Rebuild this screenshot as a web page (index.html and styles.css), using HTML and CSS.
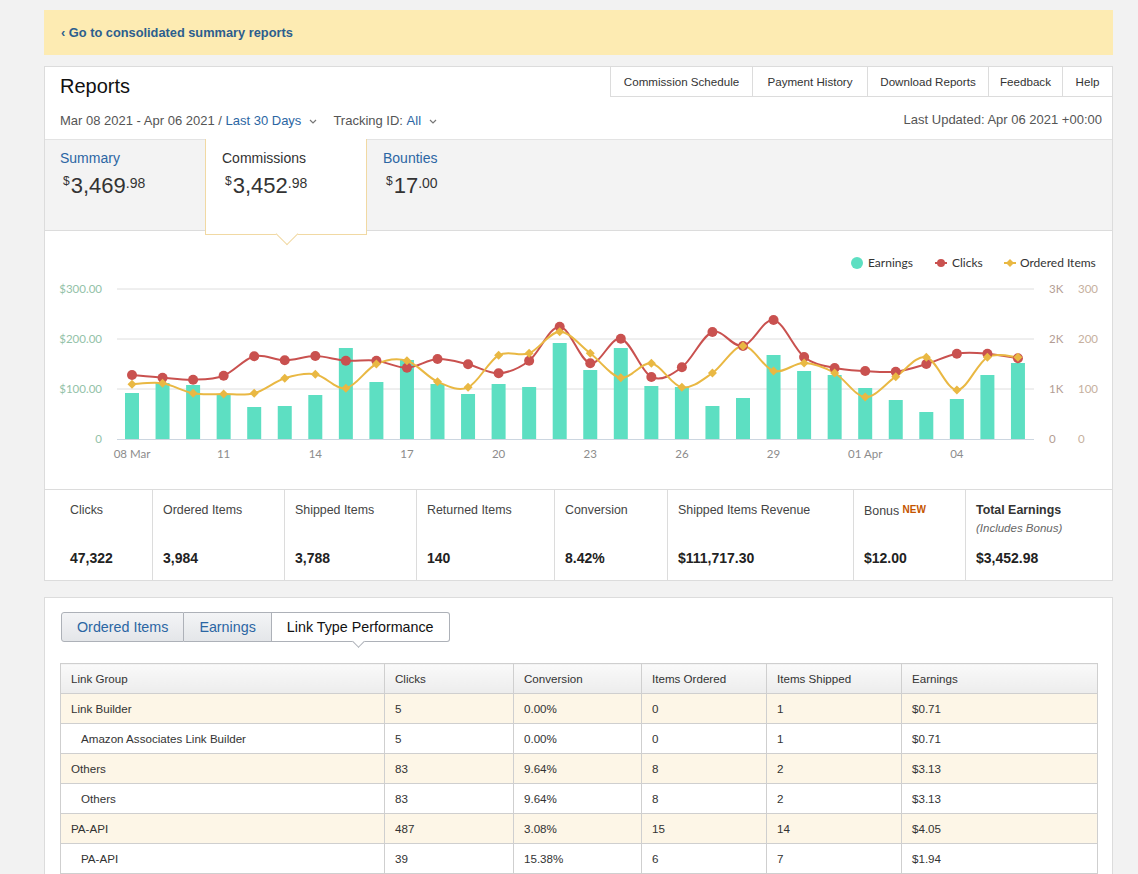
FILE: index.html
```html
<!DOCTYPE html>
<html lang="en">
<head>
<meta charset="utf-8">
<title>Reports</title>
<link rel="stylesheet" href="styles.css">
</head>
<body>
<div class="page">
  <div class="banner"><a class="banner-link" href="#">&lsaquo; Go to consolidated summary reports</a></div>

  <section class="card report">
    <header class="report-head">
      <div class="head-left">
        <h1 class="title">Reports</h1>
        <div class="filters">
          <span class="muted">Mar 08 2021 - Apr 06 2021 / </span><a class="link" href="#">Last 30 Days</a><svg class="chev" width="8" height="5" viewBox="0 0 8 5"><path d="M1 1l3 3 3-3" /></svg>
          <span class="muted filter-gap">Tracking ID: </span><a class="link" href="#">All</a><svg class="chev" width="8" height="5" viewBox="0 0 8 5"><path d="M1 1l3 3 3-3" /></svg>
        </div>
      </div>
      <div class="head-right">
        <nav class="topnav">
          <a class="nav-item w1" href="#">Commission Schedule</a>
          <a class="nav-item w2" href="#">Payment History</a>
          <a class="nav-item w3" href="#">Download Reports</a>
          <a class="nav-item w4" href="#">Feedback</a>
          <a class="nav-item w5" href="#">Help</a>
        </nav>
        <div class="updated">Last Updated: Apr 06 2021 +00:00</div>
      </div>
    </header>

    <div class="tabs">
      <div class="tab first">
        <div class="tab-label link">Summary</div>
        <div class="amount"><span class="cur">$</span><span class="big">3,469</span><span class="cents">.98</span></div>
      </div>
      <div class="tab active">
        <div class="tab-label">Commissions</div>
        <div class="amount"><span class="cur">$</span><span class="big">3,452</span><span class="cents">.98</span></div>
      </div>
      <div class="tab">
        <div class="tab-label link">Bounties</div>
        <div class="amount"><span class="cur">$</span><span class="big">17</span><span class="cents">.00</span></div>
      </div>
    </div>

    <div class="chart-wrap">
      <svg id="chart" class="chart" width="1067" height="258" viewBox="45 231 1067 258">
        <g class="legend">
          <circle cx="857" cy="263" r="6" fill="#5ddfc2"/>
          <text x="868" y="267">Earnings</text>
          <line x1="935" y1="263" x2="947" y2="263" stroke="#c9514f" stroke-width="2"/>
          <circle cx="941" cy="263" r="4" fill="#c9514f"/>
          <text x="952" y="267">Clicks</text>
          <line x1="1004" y1="263" x2="1016" y2="263" stroke="#e9b843" stroke-width="2"/>
          <path d="M1010 259l4 4-4 4-4-4z" fill="#e9b843"/>
          <text x="1020" y="267">Ordered Items</text>
        </g>
        <g class="grid">
          <line x1="117" y1="289" x2="1034" y2="289"/>
          <line x1="117" y1="339" x2="1034" y2="339"/>
          <line x1="117" y1="389" x2="1034" y2="389"/>
        </g>
        <line class="baseline" x1="117" y1="439.5" x2="1034" y2="439.5"/>
        <g class="ylab-left">
          <text x="102" y="293">$300.00</text>
          <text x="102" y="343">$200.00</text>
          <text x="102" y="393">$100.00</text>
          <text x="102" y="443">0</text>
        </g>
        <g class="ylab-r1">
          <text x="1049" y="293">3K</text>
          <text x="1049" y="343">2K</text>
          <text x="1049" y="393">1K</text>
          <text x="1049" y="443">0</text>
        </g>
        <g class="ylab-r2">
          <text x="1078" y="293">300</text>
          <text x="1078" y="343">200</text>
          <text x="1078" y="393">100</text>
          <text x="1078" y="443">0</text>
        </g>
        <g class="xlab">
          <text x="132" y="458">08 Mar</text>
          <text x="223.6" y="458">11</text>
          <text x="315.3" y="458">14</text>
          <text x="407" y="458">17</text>
          <text x="498.6" y="458">20</text>
          <text x="590.2" y="458">23</text>
          <text x="681.9" y="458">26</text>
          <text x="773.5" y="458">29</text>
          <text x="865.2" y="458">01 Apr</text>
          <text x="956.8" y="458">04</text>
        </g>
        <g id="bars" class="bars"></g>
        <path id="clicks-line" class="line-clicks" d=""/>
        <path id="items-line" class="line-items" d=""/>
        <g id="clicks-pts" class="pts-clicks"></g>
        <g id="items-pts" class="pts-items"></g>
      </svg>
    </div>

    <div class="stats">
      <div class="stat first"><div class="stat-label">Clicks</div><div class="stat-value">47,322</div></div>
      <div class="stat"><div class="stat-label">Ordered Items</div><div class="stat-value">3,984</div></div>
      <div class="stat"><div class="stat-label">Shipped Items</div><div class="stat-value">3,788</div></div>
      <div class="stat"><div class="stat-label">Returned Items</div><div class="stat-value">140</div></div>
      <div class="stat"><div class="stat-label">Conversion</div><div class="stat-value">8.42%</div></div>
      <div class="stat"><div class="stat-label">Shipped Items Revenue</div><div class="stat-value">$111,717.30</div></div>
      <div class="stat"><div class="stat-label">Bonus <span class="new">NEW</span></div><div class="stat-value">$12.00</div></div>
      <div class="stat"><div class="stat-label strong">Total Earnings</div><div class="stat-sub">(Includes Bonus)</div><div class="stat-value">$3,452.98</div></div>
    </div>
  </section>

  <section class="card perf">
    <div class="btn-group">
      <a class="seg" href="#">Ordered Items</a>
      <a class="seg" href="#">Earnings</a>
      <a class="seg selected" href="#">Link Type Performance</a>
    </div>
    <table class="ltable">
      <colgroup>
        <col class="c1"><col class="c2"><col class="c3"><col class="c4"><col class="c5"><col class="c6">
      </colgroup>
      <thead>
        <tr><th>Link Group</th><th>Clicks</th><th>Conversion</th><th>Items Ordered</th><th>Items Shipped</th><th>Earnings</th></tr>
      </thead>
      <tbody>
        <tr class="group"><td>Link Builder</td><td>5</td><td>0.00%</td><td>0</td><td>1</td><td>$0.71</td></tr>
        <tr class="sub"><td>Amazon Associates Link Builder</td><td>5</td><td>0.00%</td><td>0</td><td>1</td><td>$0.71</td></tr>
        <tr class="group"><td>Others</td><td>83</td><td>9.64%</td><td>8</td><td>2</td><td>$3.13</td></tr>
        <tr class="sub"><td>Others</td><td>83</td><td>9.64%</td><td>8</td><td>2</td><td>$3.13</td></tr>
        <tr class="group"><td>PA-API</td><td>487</td><td>3.08%</td><td>15</td><td>14</td><td>$4.05</td></tr>
        <tr class="sub"><td>PA-API</td><td>39</td><td>15.38%</td><td>6</td><td>7</td><td>$1.94</td></tr>
      </tbody>
    </table>
  </section>
</div>
<script src="script.js"></script>
</body>
</html>
```

FILE: styles.css
```css
* { box-sizing: border-box; }
html, body { margin: 0; padding: 0; }
body {
  background: #f2f2f2;
  font-family: "Liberation Sans", Arial, sans-serif;
  color: #333;
}
a { text-decoration: none; }

.page {
  width: 1113px;
  padding: 10px 0 0 44px;
}

.banner {
  height: 45px;
  background: #fdebb2;
  display: flex;
  align-items: center;
  padding-left: 17px;
}
.banner-link {
  color: #2c5e8e;
  font-weight: bold;
  font-size: 12.8px;
}

.card {
  background: #fff;
  border: 1px solid #dcdcdc;
}
.report { margin-top: 11px; }

/* header */
.report-head {
  display: flex;
  justify-content: space-between;
  height: 72px;
}
.head-left { padding: 7px 0 0 15px; }
.title {
  margin: 0;
  font-weight: normal;
  font-size: 20px;
  line-height: 24px;
  color: #111;
}
.filters {
  margin-top: 14px;
  font-size: 13px;
  line-height: 18px;
  display: flex;
  align-items: center;
  white-space: pre;
}
.muted { color: #555; }
.link { color: #2b66a3; }
.chev {
  margin-left: 8px;
  fill: none;
  stroke: #777;
  stroke-width: 1.2;
}
.filter-gap { margin-left: 16px; }

.head-right {
  display: flex;
  flex-direction: column;
  align-items: flex-end;
}
.topnav { display: flex; height: 30px; }
.nav-item {
  height: 30px;
  padding-bottom: 1px;
  border-left: 1px solid #dcdcdc;
  border-bottom: 1px solid #dcdcdc;
  font-size: 11.6px;
  color: #333;
  display: flex;
  align-items: center;
  justify-content: center;
}
.w1 { width: 142px; }
.w2 { width: 115px; }
.w3 { width: 121px; }
.w4 { width: 74px; }
.w5 { width: 50px; }
.updated {
  margin-top: 14px;
  padding-right: 10px;
  font-size: 13px;
  line-height: 18px;
  color: #555;
}

/* tabs */
.tabs {
  display: flex;
  height: 92px;
  background: #f3f3f3;
  border-top: 1px solid #e3e3e3;
  border-bottom: 1px solid #dcdcdc;
}
.tab {
  width: 161px;
  padding: 9px 0 0 16px;
}
.tab.first { width: 160px; padding-left: 15px; }
.tab.active {
  position: relative;
  z-index: 2;
  width: 162px;
  height: 96px;
  margin-top: -1px;
  padding: 10px 0 0 16px;
  background: #fff;
  border: 1px solid #f1d9a3;
  border-top: none;
}
.tab.active::after {
  content: "";
  position: absolute;
  left: 73px;
  bottom: -8px;
  width: 15px;
  height: 15px;
  background: #fff;
  border-right: 1px solid #f1d9a3;
  border-bottom: 1px solid #f1d9a3;
  transform: rotate(45deg);
}
.tab-label {
  font-size: 14px;
  line-height: 18px;
  color: #333;
}
.tab-label.link { color: #2b66a3; }
.amount {
  display: flex;
  align-items: flex-start;
  margin-top: 7px;
  padding-left: 3px;
  color: #333;
}
.cur { font-size: 12px; line-height: 14px; margin-right: 1px; }
.big { font-size: 22px; line-height: 24px; }
.cents { font-size: 14px; line-height: 16px; margin-top: 1px; }

/* chart */
.chart-wrap { height: 258px; }
.chart { display: block; font-family: "Lato", "Liberation Sans", sans-serif; }
.legend text { font-size: 12px; fill: #333; }
.grid line { stroke: #dedede; stroke-width: 1; }
.baseline { stroke: #ccd6e0; stroke-width: 1; }
.ylab-left text { font-size: 11.5px; fill: #93c2a8; text-anchor: end; }
.ylab-r1 text { font-size: 11.5px; fill: #b39d94; }
.ylab-r2 text { font-size: 11.5px; fill: #c6b09e; }
.xlab text { font-size: 11.5px; fill: #8c8c8c; text-anchor: middle; }
.bars rect { fill: #5ddfc2; }
.line-clicks { fill: none; stroke: #c9514f; stroke-width: 2; }
.line-items { fill: none; stroke: #e9b843; stroke-width: 2; }
.pts-clicks circle { fill: #c9514f; }
.pts-items path { fill: #e9b843; }

/* stats */
.stats {
  display: grid;
  grid-template-columns: 107px 132px 132px 138px 113px 186px 112px 147px;
  height: 91px;
  border-top: 1px solid #dcdcdc;
}
.stat {
  display: flex;
  flex-direction: column;
  padding: 11px 10px 13px 10px;
  border-left: 1px solid #dcdcdc;
}
.stat.first { border-left: none; padding-left: 25px; }
.stat-label {
  font-size: 12.4px;
  line-height: 18px;
  color: #444;
}
.stat-label.strong { font-weight: bold; color: #333; }
.new {
  font-size: 10px;
  font-weight: bold;
  color: #c45500;
  vertical-align: 2px;
}
.stat-sub {
  font-size: 11.5px;
  line-height: 18px;
  font-style: italic;
  color: #666;
}
.stat-value {
  margin-top: auto;
  font-size: 14px;
  line-height: 18px;
  font-weight: bold;
  color: #222;
}

/* performance card */
.perf {
  margin-top: 16px;
  padding: 14px 15px 30px 15px;
}
.btn-group {
  display: flex;
  margin-left: 1px;
}
.seg {
  height: 30px;
  padding: 0 15px;
  display: flex;
  align-items: center;
  font-size: 14.3px;
  color: #2b66a3;
  background: linear-gradient(#f3f4f6, #e4e6e9);
  border: 1px solid #adb1b8;
  border-left: none;
}
.seg:first-child {
  border-left: 1px solid #adb1b8;
  border-radius: 3px 0 0 3px;
}
.seg.selected {
  position: relative;
  color: #111;
  background: #fff;
  border-radius: 0 3px 3px 0;
}
.seg.selected::after {
  content: "";
  position: absolute;
  left: 82px;
  bottom: -5px;
  width: 8px;
  height: 8px;
  background: #fff;
  border-right: 1px solid #adb1b8;
  border-bottom: 1px solid #adb1b8;
  transform: rotate(45deg);
}

.ltable {
  margin-top: 21px;
  width: 1037px;
  border-collapse: collapse;
  table-layout: fixed;
  font-size: 11.6px;
  color: #333;
}
.c1 { width: 324px; }
.c2 { width: 129px; }
.c3 { width: 128px; }
.c4 { width: 125px; }
.c5 { width: 135px; }
.c6 { width: 196px; }
.ltable th, .ltable td {
  border: 1px solid #cfcfcf;
  text-align: left;
  padding: 6px 10px;
  line-height: 17px;
  font-weight: normal;
}
.ltable th { background: linear-gradient(#fafafa, #ececec); }
.ltable tr.group td { background: #fdf6e7; }
.ltable tr.sub td:first-child { padding-left: 20px; }
```

FILE: script.js
```js
(function () {
  var NS = "http://www.w3.org/2000/svg";
  var X0 = 132, DX = 30.55, BASE = 439;
  var bars = [393, 383, 385, 395, 407, 406, 395, 348, 382, 360, 384, 394, 384, 387, 343, 370, 348, 386, 387, 406, 398, 355, 371, 375, 388, 400, 412, 399, 375, 363];
  var clicks = [375, 377.7, 379.7, 375.7, 356.3, 360.3, 356, 360.7, 360.7, 367.7, 359, 364.3, 373.3, 360.7, 326.7, 363.3, 338.7, 377, 367.3, 332, 346, 320, 357, 368, 371, 371.7, 364, 353.7, 353.7, 358.3];
  var items = [384.3, 383.3, 393.3, 394, 393.3, 378.3, 374.3, 388.3, 364, 360.7, 381.7, 387.3, 355.3, 353.3, 331.7, 353.3, 377.7, 363.3, 387.3, 373, 346, 371, 363, 373, 397, 376.7, 357.3, 390, 357.3, 357.3];

  function el(tag, attrs) {
    var e = document.createElementNS(NS, tag);
    for (var k in attrs) e.setAttribute(k, attrs[k]);
    return e;
  }
  function f(n) { return Math.round(n * 100) / 100; }

  var gb = document.getElementById("bars");
  bars.forEach(function (t, i) {
    var x = X0 + DX * i;
    gb.appendChild(el("rect", { x: f(x - 7), y: t, width: 14, height: f(BASE - t) }));
  });

  function smooth(ys) {
    var p = ys.map(function (y, i) { return [X0 + DX * i, y]; });
    var d = "M" + f(p[0][0]) + "," + f(p[0][1]);
    for (var i = 0; i < p.length - 1; i++) {
      var p0 = p[i - 1] || p[i], p1 = p[i], p2 = p[i + 1], p3 = p[i + 2] || p2;
      var c1x = p1[0] + (p2[0] - p0[0]) / 6, c1y = p1[1] + (p2[1] - p0[1]) / 6;
      var c2x = p2[0] - (p3[0] - p1[0]) / 6, c2y = p2[1] - (p3[1] - p1[1]) / 6;
      d += " C" + f(c1x) + "," + f(c1y) + " " + f(c2x) + "," + f(c2y) + " " + f(p2[0]) + "," + f(p2[1]);
    }
    return d;
  }
  document.getElementById("clicks-line").setAttribute("d", smooth(clicks));
  document.getElementById("items-line").setAttribute("d", smooth(items));

  var gc = document.getElementById("clicks-pts");
  clicks.forEach(function (y, i) {
    gc.appendChild(el("circle", { cx: f(X0 + DX * i), cy: y, r: 5 }));
  });
  var gi = document.getElementById("items-pts");
  items.forEach(function (y, i) {
    var x = X0 + DX * i;
    gi.appendChild(el("path", { d: "M" + f(x) + " " + f(y - 4.5) + "l4.5 4.5-4.5 4.5-4.5-4.5z" }));
  });
})();
```
